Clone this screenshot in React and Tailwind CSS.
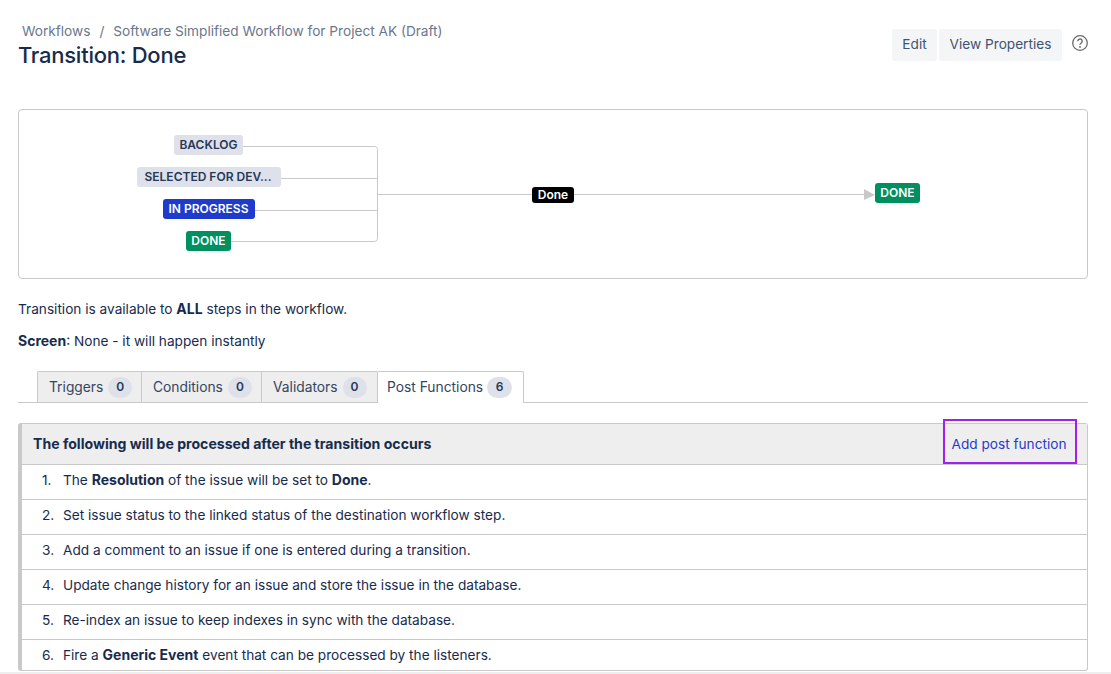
const FONT = { fontFamily: 'Inter, "Noto Sans", sans-serif' };

const TABS = [
  { label: 'Triggers', count: 0, width: 'w-[104px]' },
  { label: 'Conditions', count: 0, width: 'w-[120px]' },
  { label: 'Validators', count: 0, width: 'w-[116px]' },
];

const STEPS = [
  <>The <b className="text-[14px] font-bold">Resolution</b> of the issue will be set to <b className="text-[14px] font-bold">Done</b>.</>,
  <>Set issue status to the linked status of the destination workflow step.</>,
  <>Add a comment to an issue if one is entered during a transition.</>,
  <>Update change history for an issue and store the issue in the database.</>,
  <>Re-index an issue to keep indexes in sync with the database.</>,
  <>Fire a <b className="text-[14px] font-bold">Generic Event</b> event that can be processed by the listeners.</>,
];

const Lozenge = ({ className, children }) => (
  <span className={`absolute h-5 rounded-[3px] text-[12px] leading-5 font-semibold text-center whitespace-nowrap ${className}`}>
    {children}
  </span>
);

const Count = ({ className = 'w-6', children }) => (
  <span className={`inline-flex h-[21px] items-center justify-center rounded-full bg-[#dfe1ea] text-[12px] font-semibold text-[#253858] ${className}`}>
    {children}
  </span>
);

const Diagram = () => (
  <div className="relative h-[170px] rounded-[4px] border border-[#c9c9c9]">
    <svg className="absolute left-0 top-0" width="1068" height="168" fill="none" stroke="#c9c9c9">
      <path d="M224 36.500H355.500a3 3 0 0 1 3 3V128.500a3 3 0 0 1-3 3H212" />
      <path d="M262 68.500H358.500M236 100.500H358.500M358.500 84.500H514M554 84.500H846" />
      <path d="M845 79L856 85L845 90Z" fill="#c9c9c9" stroke="none" />
    </svg>
    <Lozenge className="left-[155px] top-[25px] w-[69px] bg-[#dfe1ea] text-[#253858]">BACKLOG</Lozenge>
    <Lozenge className="left-[118px] top-[57px] w-[144px] bg-[#dfe1ea] pr-[2px] text-[#253858]">SELECTED FOR DEV...</Lozenge>
    <Lozenge className="left-[144px] top-[89px] w-[92px] bg-[#1f3bce] pr-[1px] text-white">IN PROGRESS</Lozenge>
    <Lozenge className="left-[167px] top-[121px] w-[45px] bg-[#00905f] text-white">DONE</Lozenge>
    <span className="absolute left-[513px] top-[77px] h-4 w-[42px] rounded-[3px] bg-black text-center text-[12px] leading-4 font-semibold text-white">Done</span>
    <Lozenge className="left-[856px] top-[73px] w-[45px] bg-[#00905f] text-white">DONE</Lozenge>
  </div>
);

const App = () => (
  <div className="relative h-[674px] overflow-hidden bg-white pl-[18px] pr-[23px] text-[13.65px] text-[#172b4d]" style={FONT}>
    {/* Header */}
    <div className="flex h-[109px] items-start justify-between">
      <div className="pt-[22px]">
        <div className="flex h-[18px] items-center pl-1 leading-[18px] text-[#6b778c]">
          <span>Workflows</span>
          <span className="mx-[9px]">/</span>
          <span>Software Simplified Workflow for Project AK (Draft)</span>
        </div>
        <h1 className="text-[22px] leading-[30px] font-medium tracking-[-0.25px] text-[#172b4d]">Transition: Done</h1>
      </div>
      <div className="flex items-center pt-[29px]">
        <button className="h-8 w-[45px] rounded-[3px] bg-[#f4f5f7] pb-[2px] text-[#42526e]">Edit</button>
        <button className="ml-[2px] h-8 w-[123px] rounded-[3px] bg-[#f4f5f7] pb-[2px] text-[#42526e]">View Properties</button>
        <svg className="mb-[4px] ml-[10px]" width="16" height="16" viewBox="0 0 16 16" fill="none" stroke="#6b6b6b" strokeWidth="1.300">
          <circle cx="8" cy="8" r="7.300" />
          <path d="M5.800 6.200a2.200 2.200 0 1 1 3.400 1.800c-.8.500-1.200.9-1.200 1.700" strokeWidth="1.400" />
          <circle cx="8" cy="12" r=".9" fill="#6b6b6b" stroke="none" />
        </svg>
      </div>
    </div>

    <Diagram />

    <p className="mt-[21px] leading-[18px]">Transition is available to <b className="text-[14px] font-bold">ALL</b> steps in the workflow.</p>
    <p className="mt-[14px] leading-[18px]"><b className="text-[14px] font-bold">Screen</b>: None - it will happen instantly</p>

    {/* Tabs */}
    <div className="mt-[21px] flex h-[32px] border-b border-[#c9c9c9] pl-[19px]">
      {TABS.map((tab) => (
        <div key={tab.label} className={`flex h-[31px] ${tab.width} items-center gap-[5px] border-t border-l border-[#c9c9c9] bg-[#eeeeee] pl-[11px] first:rounded-tl-[2px]`}>
          <span className="text-[13.8px] text-[#344563]">{tab.label}</span>
          <Count>{tab.count}</Count>
        </div>
      ))}
      <div className="flex h-[32px] w-[147px] items-center gap-[4px] rounded-t-[2px] border border-b-0 border-[#c9c9c9] bg-white pb-[1px] pl-[9px]">
        <span className="text-[13.8px] text-[#344563]">Post Functions</span>
        <Count className="w-[25px]">6</Count>
      </div>
    </div>

    {/* Post functions */}
    <div className="relative mt-5 rounded-[3px] border border-l-4 border-[#c9c9c9]">
      <div className="flex h-[41px] items-center justify-between border-b border-[#c9c9c9] bg-[#eeeeee] pb-[1px] pl-[11px]">
        <span className="text-[14.1px] font-bold">The following will be processed after the transition occurs</span>
      </div>
      <a className="absolute right-[10px] top-[-5px] flex h-[45px] w-[134px] items-center justify-center border-2 border-[#a020f0] pr-[2px] pt-[5px] text-[#1f3bce]">Add post function</a>
      <ol>
        {STEPS.map((step, i) => (
          <li key={i} className="flex h-[35px] items-center border-b border-[#c9c9c9] pb-[4px] pl-[20px] last:h-[30px] last:border-b-0 last:pb-0">
            <span className="w-[21px]">{i + 1}.</span>
            <span>{step}</span>
          </li>
        ))}
      </ol>
    </div>
    <div className="absolute bottom-0 left-0 h-[2px] w-full bg-[#eeeeee]" />
  </div>
);

export default App;
